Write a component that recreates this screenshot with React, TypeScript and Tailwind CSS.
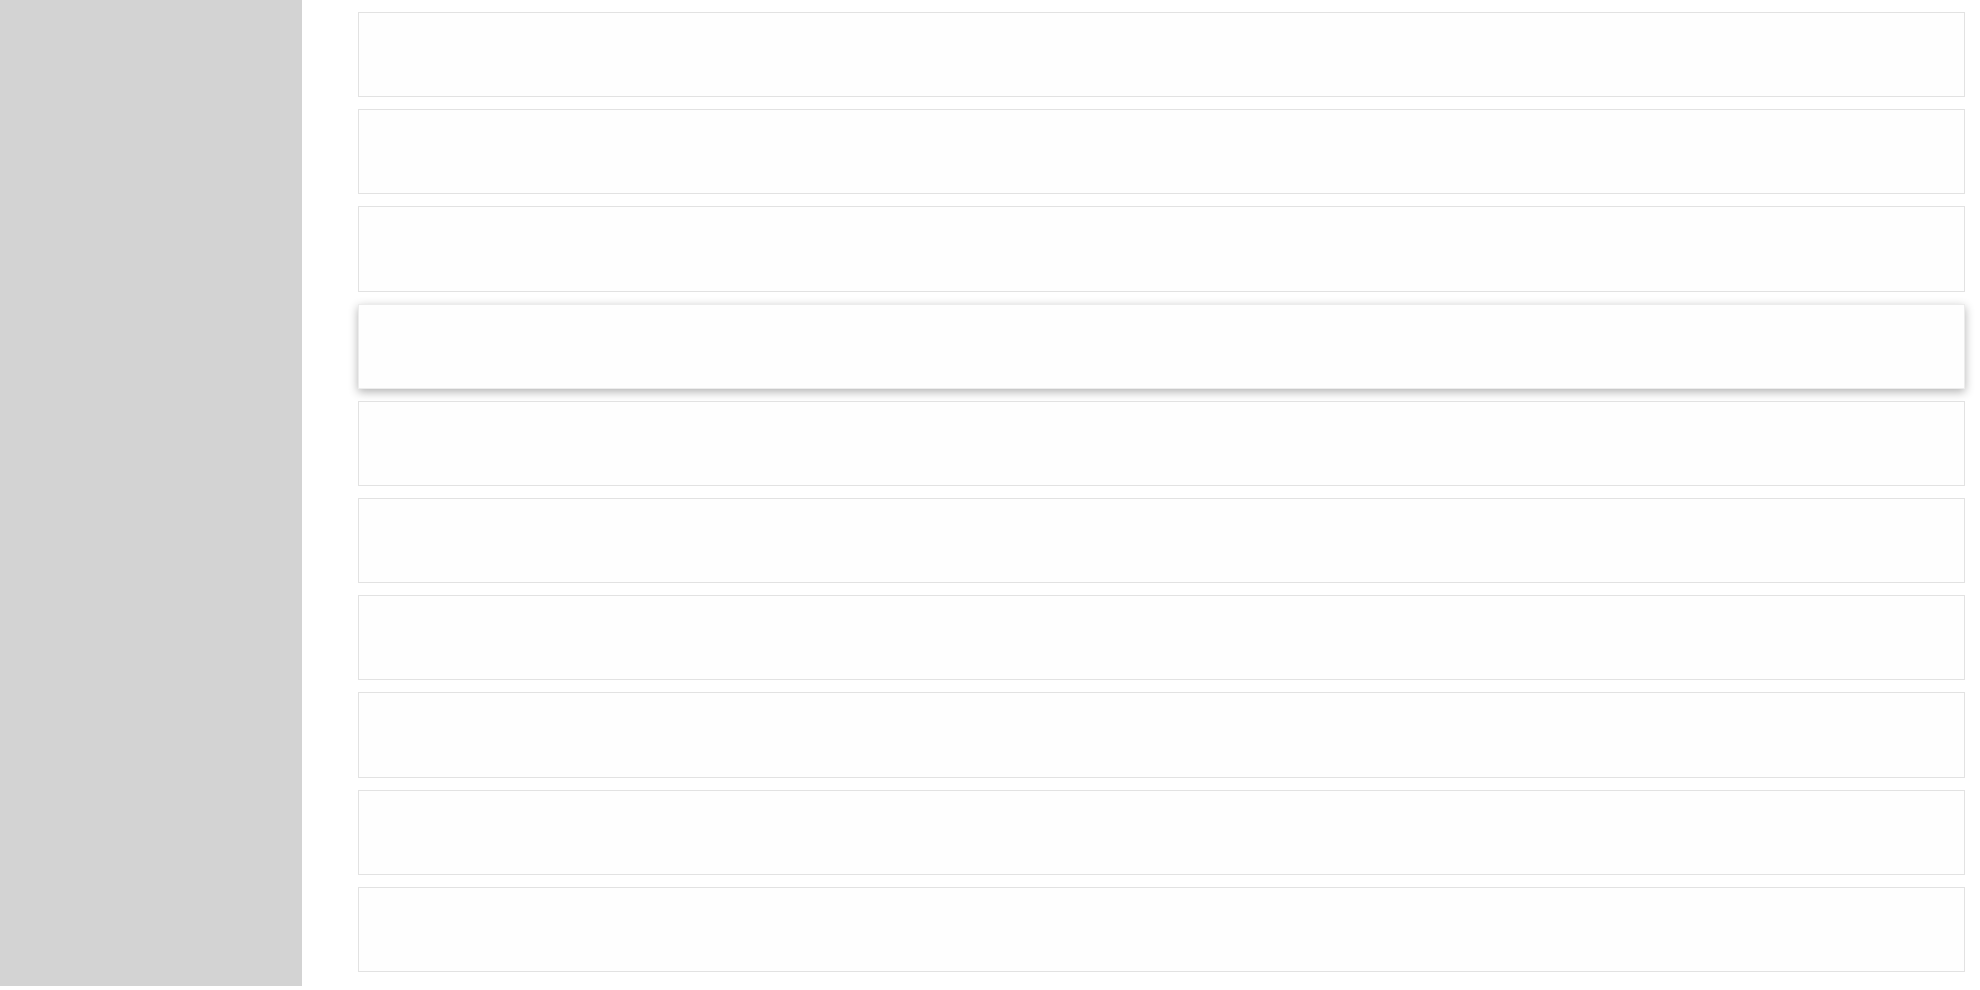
import React from "react";

const ROWS = Array.from({ length: 10 }, (_, i) => i);

export default function App() {
  return (
    <div className="flex bg-white font-['Liberation_Sans',sans-serif]">
      {/* Sidebar */}
      <aside className="w-[302px] shrink-0 bg-[#d3d3d3]" />

      {/* Rows */}
      <main className="flex-1 flex flex-col gap-[12px] pt-[12px] pb-[14px] pl-[56px] pr-[15px]">
        {ROWS.map((i) => (
          <div
            key={i}
            className={`h-[85.2px] bg-[#fefefe] border border-[#e2e2e2] ${
              i === 3 ? "shadow-[0_3px_9px_rgba(0,0,0,0.3)] border-[#ececec]" : ""
            }`}
          />
        ))}
      </main>
    </div>
  );
}
